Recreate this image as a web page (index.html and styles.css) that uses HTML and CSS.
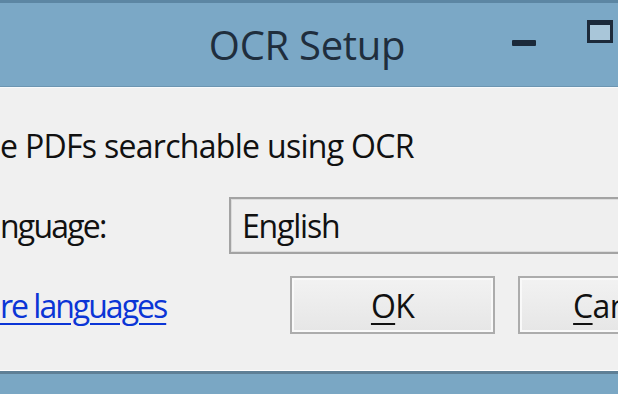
FILE: index.html
```html
<!DOCTYPE html>
<html lang="en">
<head>
    <meta charset="UTF-8">
    <title>OCR Setup</title>
    <link rel="stylesheet" href="styles.css">
</head>
<body>
    <div class="window">
        <div class="titlebar">
            <span class="title">OCR Setup</span>
            <div class="controls">
                <span class="min-btn"></span>
                <span class="max-btn"></span>
            </div>
        </div>

        <div class="client">
            <p class="caption">e PDFs searchable using OCR</p>

            <div class="row lang-row">
                <label class="label">nguage:</label>
                <div class="combo">English</div>
            </div>

            <div class="row action-row">
                <a class="link" href="#">re languages</a>
                <div class="buttons">
                    <button class="button"><u>O</u>K</button>
                    <button class="button"><u>C</u>ancel</button>
                </div>
            </div>
        </div>

        <div class="frame-bottom"></div>
    </div>
</body>
</html>
```

FILE: styles.css
```css
html, body {
    margin: 0;
    padding: 0;
    overflow: hidden;
}
body {
    width: 618px;
    height: 394px;
    font-family: "Open Sans", "Noto Sans", sans-serif;
    background-color: #7aa7c4;
}
.window {
    display: flex;
    flex-direction: column;
    width: 618px;
    height: 394px;
    overflow: hidden;
}
.titlebar {
    position: relative;
    height: 83px;
    border-top: 3px solid #5c86a3;
    border-bottom: 1px solid #6c95b1;
    background-color: #7ba8c6;
    display: flex;
    justify-content: center;
    align-items: center;
}
.title {
    font-size: 40px;
    color: #1f2e3d;
    margin-left: -4px;
    letter-spacing: -0.3px;
}
.controls {
    position: absolute;
    top: 17px;
    right: 0;
    display: flex;
    align-items: flex-start;
    gap: 51px;
}
.min-btn {
    width: 24px;
    height: 6px;
    margin-top: 20px;
    background-color: #1c2a3a;
    border-radius: 1px;
}
.max-btn {
    width: 20px;
    height: 15px;
    margin-right: 5px;
    border: 3px solid #1c2a3a;
    border-top-width: 5px;
    background-color: #a9c6d9;
}
.client {
    height: 282px;
    border-top: 1px solid #f7f9fb;
    background-color: #f0f0f0;
    color: #111;
    font-size: 32px;
    letter-spacing: -0.7px;
    white-space: nowrap;
    overflow: hidden;
}
.caption {
    margin: 38px 0 0 0;
    line-height: 40px;
}
.row {
    display: flex;
    align-items: center;
}
.lang-row {
    margin-top: 31px;
}
.label {
    flex: none;
    width: 229px;
    letter-spacing: -1.8px;
}
.combo {
    flex: none;
    width: 420px;
    height: 53px;
    line-height: 53px;
    padding-left: 11px;
    border: 2px solid #a3a3a3;
    background-color: #efefef;
    box-shadow: inset 0 0 0 1px #dcdcdc;
    letter-spacing: -1.2px;
}
.action-row {
    margin-top: 22px;
}
.link {
    flex: none;
    width: 290px;
    color: #0b35d6;
    letter-spacing: -2px;
    text-decoration: underline;
    text-underline-offset: 5px;
    text-decoration-thickness: 2px;
}
.buttons {
    display: flex;
    gap: 23px;
}
.button {
    flex: none;
    width: 205px;
    height: 58px;
    padding: 0;
    font-family: inherit;
    font-size: 32px;
    letter-spacing: -0.7px;
    color: #111;
    border: 2px solid #acacac;
    background: linear-gradient(#f2f2f2, #e6e6e6);
    box-shadow: inset 0 0 0 2px #f9f9f9;
}
.button u {
    text-underline-offset: 5px;
    text-decoration-thickness: 2px;
}
.frame-bottom {
    flex: 1;
    border-top: 1px solid #ffffff;
    box-shadow: inset 0 3px 0 #5e7f96;
    background-color: #7aa7c4;
}
```
